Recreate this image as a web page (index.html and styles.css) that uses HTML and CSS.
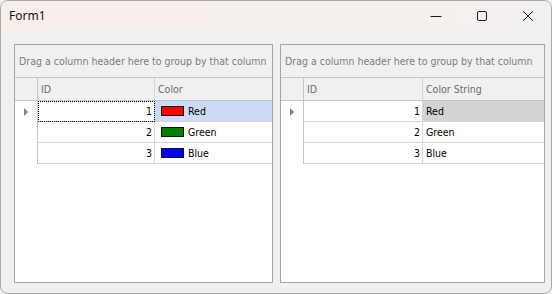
FILE: index.html
```html
<!DOCTYPE html>
<html lang="en">
<head>
    <meta charset="UTF-8">
    <title>Form1</title>
    <link rel="stylesheet" href="styles.css">
</head>
<body>
    <div class="window">
        <div class="titlebar">
            <span class="title">Form1</span>
            <div class="buttons">
                <div class="tbtn">
                    <svg width="12" height="12" viewBox="0 0 12 12"><path d="M0.5 6.5h11" stroke="#1a1a1a" stroke-width="1"/></svg>
                </div>
                <div class="tbtn">
                    <svg width="12" height="12" viewBox="0 0 12 12"><rect x="1.5" y="1.5" width="9" height="9" rx="1.5" fill="none" stroke="#1a1a1a" stroke-width="1"/></svg>
                </div>
                <div class="tbtn">
                    <svg width="12" height="12" viewBox="0 0 12 12"><path d="M1 1L11 11M11 1L1 11" stroke="#1a1a1a" stroke-width="1"/></svg>
                </div>
            </div>
        </div>
        <div class="client">
            <div class="grid left">
                <div class="group-panel">Drag a column header here to group by that column</div>
                <div class="row head">
                    <div class="ind"></div>
                    <div class="cell">ID</div>
                    <div class="cell">Color</div>
                </div>
                <div class="row">
                    <div class="ind"><span class="arrow"></span></div>
                    <div class="cell num focus">1</div>
                    <div class="cell sel-blue"><span class="swatch" style="background: #ff0000"></span>Red</div>
                </div>
                <div class="row">
                    <div class="ind"></div>
                    <div class="cell num">2</div>
                    <div class="cell"><span class="swatch" style="background: #008000"></span>Green</div>
                </div>
                <div class="row">
                    <div class="ind"></div>
                    <div class="cell num">3</div>
                    <div class="cell"><span class="swatch" style="background: #0000ff"></span>Blue</div>
                </div>
            </div>
            <div class="grid right">
                <div class="group-panel">Drag a column header here to group by that column</div>
                <div class="row head">
                    <div class="ind"></div>
                    <div class="cell">ID</div>
                    <div class="cell">Color String</div>
                </div>
                <div class="row">
                    <div class="ind"><span class="arrow"></span></div>
                    <div class="cell num">1</div>
                    <div class="cell text sel-gray">Red</div>
                </div>
                <div class="row">
                    <div class="ind"></div>
                    <div class="cell num">2</div>
                    <div class="cell text">Green</div>
                </div>
                <div class="row">
                    <div class="ind"></div>
                    <div class="cell num">3</div>
                    <div class="cell text">Blue</div>
                </div>
            </div>
        </div>
    </div>
</body>
</html>
```

FILE: styles.css
```css
body {
    margin: 0;
    background-color: #f3f1f0;
    font-family: "DejaVu Sans Condensed", "Liberation Sans", sans-serif;
    font-size: 10.5px;
}

.window {
    width: 552px;
    height: 294px;
    box-sizing: border-box;
    border: 1px solid #a9a9a9;
    border-radius: 8px;
    overflow: hidden;
    display: flex;
    flex-direction: column;
    background-color: #f0f0f0;
}

.titlebar {
    height: 29px;
    display: flex;
    align-items: center;
    justify-content: space-between;
    background: linear-gradient(to right, #f8efeb, #f3f1f0);
}
.title {
    padding-left: 8px;
    font-family: "Noto Sans", sans-serif;
    font-size: 12px;
    color: #111;
}
.buttons {
    display: flex;
    height: 100%;
}
.tbtn {
    width: 46px;
    height: 100%;
    display: flex;
    align-items: center;
    justify-content: center;
}

.client {
    flex: 1;
    display: flex;
    gap: 7px;
    padding: 14px 0 0 13px;
}

.grid {
    height: 239px;
    box-sizing: border-box;
    border: 1px solid #a5a5a5;
    background-color: #fff;
}
.grid.left {
    width: 259px;
}
.grid.right {
    width: 265px;
}
.left .row {
    grid-template-columns: 23px 117px 1fr;
}
.right .row {
    grid-template-columns: 23px 119px 1fr;
}

.group-panel {
    height: 32px;
    line-height: 32px;
    padding-left: 4px;
    background-color: #f0f0f0;
    border-bottom: 1px solid #c6c6c6;
    color: #7c7c7c;
    white-space: nowrap;
    overflow: hidden;
}

.row {
    display: grid;
    height: 21px;
}
.row.head {
    height: 23px;
    background-color: #f0f0f0;
    color: #6b6b6b;
}
.row.head .cell,
.row.head .ind {
    border-bottom: 1px solid #c6c6c6;
    padding-left: 3px;
}
.row.head .cell:first-of-type {
    padding-left: 4px;
}

.ind {
    border-right: 1px solid #c6c6c6;
    display: flex;
    align-items: center;
    justify-content: center;
}
.cell {
    border-right: 1px solid #d6d6d6;
    border-bottom: 1px solid #d6d6d6;
    display: flex;
    align-items: center;
    white-space: nowrap;
    color: #000;
    padding-left: 6px;
}
.row.head .cell {
    color: #6b6b6b;
}
.cell:last-child {
    border-right: none;
}
.cell.num {
    justify-content: flex-end;
    padding-left: 0;
    padding-right: 2px;
}
.cell.text {
    padding-left: 3px;
}

.focus {
    outline: 1px dotted #000;
    outline-offset: -1px;
}
.sel-blue {
    background-color: #cddcf4;
}
.sel-gray {
    background-color: #d3d3d3;
}

.swatch {
    width: 21px;
    height: 8px;
    border: 1px solid #111;
    margin-right: 4px;
}

.arrow {
    width: 0;
    height: 0;
    border-top: 4px solid transparent;
    border-bottom: 4px solid transparent;
    border-left: 4px solid #808080;
    margin-left: -1px;
}
```
